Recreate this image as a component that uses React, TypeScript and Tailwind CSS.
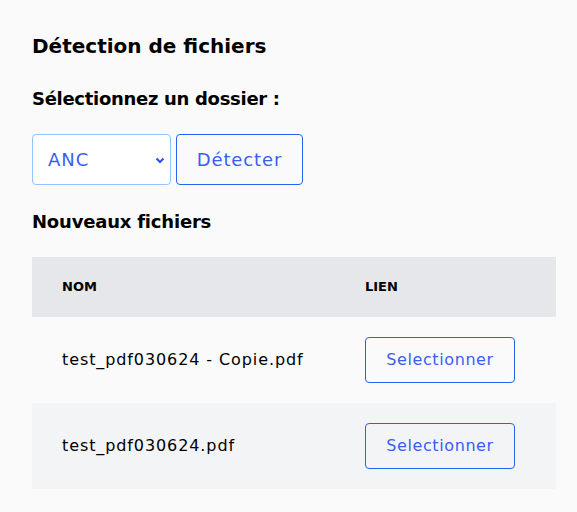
import React, { useState } from 'react';

const files = ['test_pdf030624 - Copie.pdf', 'test_pdf030624.pdf'];

const App = () => {
  const [folder, setFolder] = useState('ANC');

  return (
    <div className="min-h-screen w-full bg-[#fafafa] text-black font-['DejaVu_Sans',sans-serif]">
      <div className="pl-8 pr-[21px] pt-[31px] pb-6">
        <h2 className="text-[20px] font-bold leading-[30px]">Détection de fichiers</h2>

        <h3 className="mt-[24px] text-[18px] font-semibold leading-[28px] tracking-[-0.3px]">Sélectionnez un dossier :</h3>

        <div className="mt-[21px] flex gap-[5px]">
          <div className="relative">
            <select
              value={folder}
              onChange={(e) => setFolder(e.target.value)}
              className="h-[51px] w-[139px] appearance-none rounded-[4px] border border-[#93c5fd] bg-white pl-[15px] text-[18px] tracking-[1px] text-[#3a5ef0] outline-none"
            >
              <option value="ANC">ANC</option>
              <option value="AUTRE">AUTRE</option>
            </select>
            <svg
              className="pointer-events-none absolute right-[6px] top-[21px] h-[10px] w-[10px] text-[#2f55e8]"
              viewBox="0 0 10 10"
              fill="none"
              stroke="currentColor"
              strokeWidth="2.2"
            >
              <path d="M1.5 3.5 5 7l3.5-3.5" />
            </svg>
          </div>
          <button className="h-[51px] w-[127px] rounded-[4px] border border-[#2563eb] text-[18px] tracking-[0.9px] text-[#3a5ef0]">
            Détecter
          </button>
        </div>

        <h3 className="mt-[23px] text-[18px] font-semibold leading-[28px] tracking-[-0.2px]">Nouveaux fichiers</h3>

        <table className="mt-[21px] w-[524px] border-collapse text-left">
          <thead>
            <tr className="h-[60px] bg-[#e5e7eb]">
              <th className="w-[303px] pl-[30px] text-[13px] font-bold uppercase">Nom</th>
              <th className="pl-[30px] text-[13px] font-bold uppercase">Lien</th>
            </tr>
          </thead>
          <tbody>
            {files.map((f, i) => (
              <tr key={f} className={i % 2 === 1 ? 'bg-[#f3f4f6]' : ''}>
                <td className="py-5 pl-[30px] text-[16px] tracking-[0.9px]">{f}</td>
                <td className="py-5 pl-[30px]">
                  <button className="h-[46px] w-[150px] rounded-[4px] border border-[#2563eb] text-[16px] tracking-[0.6px] text-[#3a5ef0]">
                    Selectionner
                  </button>
                </td>
              </tr>
            ))}
          </tbody>
        </table>
      </div>
    </div>
  );
};

export default App;
